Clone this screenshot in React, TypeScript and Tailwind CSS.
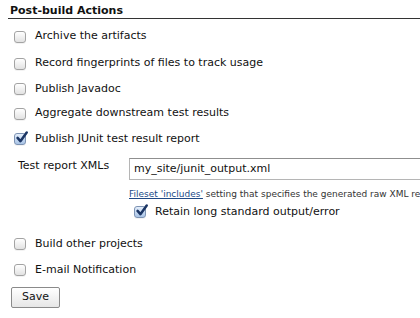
import React from "react";

function Box({ checked = false }: { checked?: boolean }) {
  return (
    <span
      className={`relative inline-flex h-[12px] w-[12px] shrink-0 rounded-[3px] border shadow-[0_1px_0_rgba(0,0,0,0.05)] ${
        checked
          ? "border-[#7d93b3] bg-gradient-to-b from-[#e4eefb] to-[#a9c4e6]"
          : "border-[#a3a3a3] bg-gradient-to-b from-[#ffffff] to-[#e2e2e2]"
      }`}
    >
      {checked && (
        <svg viewBox="0 0 12 12" className="absolute -top-[3px] left-[0px] h-[13px] w-[13px]">
          <path d="M2.4 6.4 L5 9.4 L10.8 1.4" fill="none" stroke="#1b3564" strokeWidth="2.3" strokeLinecap="round" strokeLinejoin="round" />
        </svg>
      )}
    </span>
  );
}

const top = [
  { label: "Archive the artifacts", h: "h-[27px]" },
  { label: "Record fingerprints of files to track usage", h: "h-[27px]" },
  { label: "Publish Javadoc", h: "h-[24px]" },
  { label: "Aggregate downstream test results", h: "h-[25px]" },
];

export default function App() {
  return (
    <div className="h-[318px] w-[420px] overflow-hidden bg-white text-[11px] text-[#111] [font-family:Verdana,'DejaVu_Sans',sans-serif]">
      <div className="pl-[8px] pt-[4px]">
        {/* header */}
        <div className="border-b border-[#333] pl-[2px] text-[11px] font-bold leading-[14px]">
          Post-build Actions
        </div>

        <div className="pt-[4px]">
          {top.map((r) => (
            <label key={r.label} className={`flex items-center gap-[9px] pl-[6px] ${r.h}`}>
              <Box />
              <span>{r.label}</span>
            </label>
          ))}
          <label className="flex h-[26px] items-center gap-[9px] pl-[6px]">
            <Box checked />
            <span>Publish JUnit test result report</span>
          </label>

          {/* junit config */}
          <div className="flex items-start pt-[6px]">
            <div className="w-[121px] shrink-0 whitespace-nowrap pl-[10px] pt-[1px] leading-[14px]">Test report XMLs</div>
            <div className="min-w-0 flex-1">
              <div className="flex h-[22px] w-[320px] items-center border border-[#b5b5b5] border-t-[#8f8f8f] pl-[4px] pt-[1px] text-[11px]">
                my_site/junit_output.xml
              </div>
              <div className="mt-[8px] overflow-hidden whitespace-nowrap text-[9px] leading-[12px] text-[#333]">
                <span className="text-[#204a87] underline">Fileset 'includes'</span> setting that specifies the generated raw XML report files
              </div>
              <label className="mt-[2px] flex h-[20px] items-center gap-[9px] pl-[5px]">
                <Box checked />
                <span>Retain long standard output/error</span>
              </label>
            </div>
          </div>

          <div className="pt-[9px]">
            <label className="flex h-[26px] items-center gap-[9px] pl-[6px]">
              <Box />
              <span>Build other projects</span>
            </label>
            <label className="flex h-[26px] items-center gap-[9px] pl-[6px]">
              <Box />
              <span>E-mail Notification</span>
            </label>
          </div>

          <button className="ml-[3px] mt-[4px] block h-[21px] w-[49px] rounded-[2px] border border-[#8a8a8a] bg-gradient-to-b from-[#ffffff] to-[#e6e6e6] text-[11px] text-[#111]">
            Save
          </button>
        </div>
      </div>
    </div>
  );
}
